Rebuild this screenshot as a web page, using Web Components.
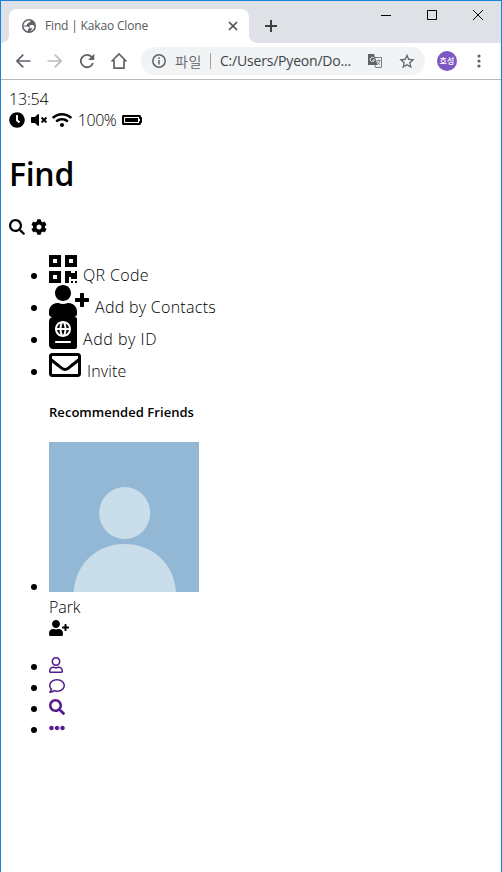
<!DOCTYPE html>
<html lang="en">
<head>
<meta charset="utf-8">
<title>Find | Kakao Clone</title>
<style>
html,body{margin:0;height:100%;background:#fff;overflow:hidden}
body{font-family:"Open Sans","Noto Sans CJK KR",sans-serif;font-size:16px;font-weight:350;color:#000}
</style>
</head>
<body>
<browser-window></browser-window>
<script>
const ICONS = {
clock:[512,'M256,8C119,8,8,119,8,256S119,504,256,504,504,393,504,256,393,8,256,8Zm92.49,313h0l-20,25a16,16,0,0,1-22.49,2.5h0l-67-49.72a40,40,0,0,1-15-31.23V112a16,16,0,0,1,16-16h32a16,16,0,0,1,16,16V256l58,42.5A16,16,0,0,1,348.49,321Z'],
mute:[512,'M215.03 71.05L126.06 160H24c-13.26 0-24 10.74-24 24v144c0 13.25 10.74 24 24 24h102.06l88.97 88.95c15.03 15.03 40.97 4.47 40.97-16.97V88.02c0-21.46-25.96-31.98-40.97-16.97zM461.64 256l45.64-45.64c6.3-6.3 6.3-16.52 0-22.82l-22.82-22.82c-6.3-6.3-16.52-6.3-22.82 0L416 210.36l-45.64-45.64c-6.3-6.3-16.52-6.3-22.82 0l-22.82 22.82c-6.3 6.3-6.3 16.52 0 22.82L370.36 256l-45.63 45.63c-6.3 6.3-6.3 16.52 0 22.82l22.82 22.82c6.3 6.3 16.52 6.3 22.82 0L416 301.64l45.64 45.64c6.3 6.3 16.52 6.3 22.82 0l22.82-22.82c6.3-6.3 6.3-16.52 0-22.82L461.64 256z'],
wifi:[640,'M634.91 154.88C457.74-8.99 182.19-8.93 5.09 154.88c-6.66 6.16-6.79 16.59-.35 22.98l34.24 33.97c6.14 6.1 16.02 6.23 22.4.38 145.92-133.68 371.3-133.71 517.25 0 6.38 5.85 16.26 5.71 22.4-.38l34.24-33.97c6.43-6.39 6.3-16.82-.36-22.98zM320 352c-35.35 0-64 28.65-64 64s28.65 64 64 64 64-28.65 64-64-28.65-64-64-64zm202.67-83.59c-115.26-101.93-290.21-101.82-405.34 0-6.9 6.1-7.12 16.69-.57 23.15l34.44 33.99c6 5.92 15.66 6.32 22.05.8 83.95-72.57 209.74-72.41 293.49 0 6.39 5.52 16.05 5.13 22.05-.8l34.44-33.99c6.56-6.46 6.33-17.06-.56-23.15z'],
battery:[640,'M544 160v64h32v64h-32v64H64V160h480m16-64H48c-26.51 0-48 21.49-48 48v224c0 26.51 21.49 48 48 48h512c26.51 0 48-21.49 48-48v-16h8c13.255 0 24-10.745 24-24V184c0-13.255-10.745-24-24-24h-8v-16c0-26.51-21.49-48-48-48zm-48 96H96v128h416V192z'],
search:[512,'M505 442.7L405.3 343c-4.5-4.5-10.6-7-17-7H372c27.6-35.3 44-79.7 44-128C416 93.1 322.9 0 208 0S0 93.1 0 208s93.1 208 208 208c48.3 0 92.7-16.4 128-44v16.3c0 6.4 2.5 12.5 7 17l99.7 99.7c9.4 9.4 24.6 9.4 33.9 0l28.3-28.3c9.4-9.4 9.4-24.6.1-34zM208 336c-70.7 0-128-57.2-128-128 0-70.7 57.2-128 128-128 70.7 0 128 57.2 128 128 0 70.7-57.2 128-128 128z'],
searchthin:[512,'M507 458L396 347c-3-3-6-4-10-4H368c30-36 48-83 48-135C416 93.100 322.900 0 208 0S0 93.100 0 208s93.100 208 208 208c50 0 97-18 133-48v17c0 4 2 8 5 11l110 110c7 7 18 7 25 0l26-25c6-7 6-17 0-23zM208 346c-76 0-138-62-138-138S132 70 208 70s138 62 138 138-62 138-138 138z'],
cog:[512,'M487.4 315.7l-42.6-24.6c4.3-23.2 4.3-47 0-70.2l42.6-24.6c4.9-2.8 7.1-8.6 5.5-14-11.1-35.6-30-67.8-54.7-94.6-3.8-4.1-10-5.1-14.8-2.3L380.8 110c-17.9-15.4-38.5-27.3-60.8-35.1V25.8c0-5.6-3.9-10.5-9.4-11.7-36.7-8.2-74.3-7.8-109.2 0-5.5 1.2-9.4 6.1-9.4 11.7V75c-22.2 7.9-42.8 19.8-60.8 35.1L88.7 85.5c-4.9-2.8-11-1.9-14.8 2.3-24.7 26.7-43.6 58.9-54.7 94.6-1.7 5.4.6 11.2 5.5 14L67.3 221c-4.3 23.2-4.3 47 0 70.2l-42.6 24.6c-4.9 2.8-7.1 8.6-5.5 14 11.1 35.6 30 67.8 54.7 94.6 3.8 4.1 10 5.1 14.8 2.3l42.6-24.6c17.9 15.4 38.5 27.3 60.8 35.1v49.2c0 5.6 3.9 10.5 9.4 11.7 36.7 8.2 74.3 7.8 109.2 0 5.5-1.2 9.4-6.1 9.4-11.7v-49.2c22.2-7.9 42.8-19.8 60.8-35.1l42.6 24.6c4.9 2.8 11 1.9 14.8-2.3 24.7-26.7 43.6-58.9 54.7-94.6 1.5-5.5-.7-11.3-5.6-14.1zM256 336c-44.1 0-80-35.9-80-80s35.9-80 80-80 80 35.9 80 80-35.9 80-80 80z'],
qrcode:[448,'M0 224h192V32H0v192zM64 96h64v64H64V96zm192-64v192h192V32H256zm128 128h-64V96h64v64zM0 480h192V288H0v192zm64-128h64v64H64v-64zm352-64h32v128h-96v-32h-32v96h-64V288h96v32h64v-32zm0 160h32v32h-32v-32zm-64 0h32v32h-32v-32z'],
userplus:[640,'M624 208h-64v-64c0-8.8-7.2-16-16-16h-32c-8.8 0-16 7.2-16 16v64h-64c-8.8 0-16 7.2-16 16v32c0 8.8 7.2 16 16 16h64v64c0 8.8 7.2 16 16 16h32c8.8 0 16-7.2 16-16v-64h64c8.8 0 16-7.2 16-16v-32c0-8.8-7.2-16-16-16zm-400 48c70.7 0 128-57.3 128-128S294.7 0 224 0 96 57.3 96 128s57.3 128 128 128zm89.6 32h-16.7c-22.2 10.2-46.9 16-72.9 16s-50.6-5.8-72.9-16h-16.7C60.2 288 0 348.2 0 422.4V464c0 26.5 21.5 48 48 48h352c26.5 0 48-21.5 48-48v-41.6c0-74.2-60.2-134.4-134.4-134.4z'],
passport:[448,'M129.62 176h39.09c1.49-27.03 6.54-51.35 14.21-70.41-27.71 13.24-48.02 39.19-53.3 70.41zm0 32c5.29 31.22 25.59 57.17 53.3 70.41-7.68-19.06-12.72-43.38-14.21-70.41h-39.09zM224 286.69c7.69-7.45 20.77-34.42 23.43-78.69h-46.87c2.67 44.26 15.75 71.24 23.44 78.69zM200.57 176h46.87c-2.66-44.26-15.74-71.24-23.43-78.69-7.7 7.45-20.78 34.43-23.44 78.69zm64.51 102.41c27.71-13.24 48.02-39.19 53.3-70.41h-39.09c-1.49 27.03-6.53 51.35-14.21 70.41zM416 0H64C28.65 0 0 28.65 0 64v384c0 35.35 28.65 64 64 64h352c17.67 0 32-14.33 32-32V32c0-17.67-14.33-32-32-32zm-80 416H112c-8.8 0-16-7.2-16-16s7.2-16 16-16h224c8.8 0 16 7.2 16 16s-7.2 16-16 16zm-112-96c-70.69 0-128-57.31-128-128S153.31 64 224 64s128 57.31 128 128-57.31 128-128 128zm41.08-214.41c7.68 19.06 12.72 43.38 14.21 70.41h39.09c-5.28-31.22-25.59-57.17-53.3-70.41z'],
envelope:[512,'M464 64H48C21.49 64 0 85.49 0 112v288c0 26.51 21.49 48 48 48h416c26.51 0 48-21.49 48-48V112c0-26.51-21.49-48-48-48zm0 48v40.805c-22.422 18.259-58.168 46.651-134.587 106.49-16.841 13.247-50.201 45.072-73.413 44.701-23.208.375-56.579-31.459-73.413-44.701C106.18 199.465 70.425 171.067 48 152.805V112h416zM48 400V214.398c22.914 18.251 55.409 43.862 104.938 82.646 21.857 17.205 60.134 55.186 103.062 54.955 42.717.231 80.509-37.199 103.053-54.947 49.528-38.783 82.032-64.401 104.947-82.653V400H48z'],
user:[448,'M313.6 304c-28.7 0-42.5 16-89.6 16-47.1 0-60.8-16-89.6-16C60.2 304 0 364.2 0 438.4V464c0 26.5 21.5 48 48 48h352c26.5 0 48-21.5 48-48v-25.6c0-74.2-60.2-134.4-134.4-134.4zM400 464H48v-25.6c0-47.6 38.8-86.4 86.4-86.4 14.6 0 38.3 16 89.6 16 51.7 0 74.9-16 89.6-16 47.6 0 86.4 38.8 86.4 86.4V464zM224 288c79.5 0 144-64.5 144-144S303.5 0 224 0 80 64.5 80 144s64.5 144 144 144zm0-240c52.9 0 96 43.1 96 96s-43.1 96-96 96-96-43.1-96-96 43.1-96 96-96z'],
comment:[512,'M256 32C114.6 32 0 125.1 0 240c0 47.6 19.9 91.2 52.9 126.3C38 405.7 7 439.1 6.5 439.5c-6.6 7-8.4 17.2-4.6 26S14.4 480 24 480c61.5 0 110-25.7 139.1-46.3C192 442.8 223.2 448 256 448c141.4 0 256-93.1 256-208S397.4 32 256 32zm0 368c-26.7 0-53.1-4.1-78.4-12.1l-22.7-7.2-19.5 13.8c-14.3 10.1-33.9 21.4-57.5 29 7.3-12.1 14.4-25.7 19.9-40.2l10.6-28.1-20.6-21.8C69.7 314.1 48 282.2 48 240c0-88.2 93.3-160 208-160s208 71.8 208 160-93.3 160-208 160z'],
dots:[512,'M328 256c0 39.8-32.2 72-72 72s-72-32.2-72-72 32.2-72 72-72 72 32.2 72 72zm104-72c-39.8 0-72 32.2-72 72s32.2 72 72 72 72-32.2 72-72-32.2-72-72-72zm-352 0c-39.8 0-72 32.2-72 72s32.2 72 72 72 72-32.2 72-72-32.2-72-72-72z']
};
const make = (name, html, setup) => customElements.define(name, class extends HTMLElement {
  constructor(){ super(); this.attachShadow({mode:'open'}); }
  connectedCallback(){
    this.shadowRoot.innerHTML = typeof html === 'function' ? html(this) : html;
    if (setup) setup(this);
  }
});

make('fa-icon', el => {
  const [w,d] = ICONS[el.getAttribute('name')];
  const s = +(el.getAttribute('size') || 16);
  return `<style>:host{display:block;flex:none;width:${w*s/512}px;height:${s}px}svg{display:block;width:100%;height:100%}</style><svg viewBox="0 0 ${w} 512"><path fill="currentColor" d="${d}"/></svg>`;
});

/* Text tracked so that it fills the given width. */
make('ui-text', `<style>:host{display:block;flex:none;white-space:pre}span{display:inline-block}</style><span><slot></slot></span>`, el => {
  const target = +el.getAttribute('width');
  const span = el.shadowRoot.querySelector('span');
  if (target) {
    span.style.letterSpacing = (target - span.getBoundingClientRect().width) / el.textContent.length + 'px';
  }
});

make('list-row', `<style>:host{display:flex;align-items:flex-start;height:var(--h,32px);line-height:var(--h,32px)}
i{flex:none;width:6px;height:6px;border-radius:50%;background:#000;margin:var(--dot,20px) 12px 0 22px}
::slotted(ui-text){padding-top:6px}
::slotted(a){color:#551a8b;padding-top:2px}.c{display:flex;gap:6px}</style><i></i><div class="c"><slot></slot></div>`);

make('profile-picture', `<style>:host{display:block;width:150px;height:150px;background:#92b8d6}svg{display:block}</style>
<svg width="150" height="150"><g fill="#c9ddea"><ellipse cx="75.7" cy="71" rx="25.5" ry="26"/><path d="M24.5 150C27 121 48 102 75.5 102S125 121 127 150Z"/></g></svg>`);

make('browser-tab', `<style>
:host{display:flex;align-items:center;position:relative;width:240px;height:34px;margin-left:8px;background:#fff;border-radius:8px 8px 0 0;color:#54585c;font-size:12px;font-weight:400;line-height:34px;box-sizing:border-box;padding-left:13px}
:host::before,:host::after{content:"";position:absolute;bottom:0;width:8px;height:8px}
:host::before{left:-8px;background:radial-gradient(circle at 0 0,#dee1e6 7.6px,#fff 8.2px)}
:host::after{right:-8px;background:radial-gradient(circle at 100% 0,#dee1e6 7.6px,#fff 8.2px)}
ui-text{margin-left:9px;width:183px}svg{display:block;flex:none}</style>
<svg width="14" height="14" viewBox="0 0 14 14"><circle cx="7" cy="7" r="7" fill="#5f6368"/><path d="M8.2 1.6C9 3 7.8 3.6 6.6 3.6c-.3 1-.8 1.2-1.6 1.2.2 1.4-.3 1.8-1.5 1.7H1.6C1.8 3.6 4.3 1.2 8.2 1.600M1.600 7.600h3.600c1.300 0 2.300 1 2.300 2.200H6v2.500C3.500 11.900 1.800 9.900 1.600 7.600M12.400 7c0 2.400-1.500 4.400-3.700 5.100V11c1-.2 1.500-.8 1.500-1.800-1.700.1-2.600-.6-2.800-1.800.2-1.200 1.200-1.600 2.600-1.400 1-.1 1.300.4 2.400 1" fill="#fff"/></svg>
<ui-text width="103">Find | Kakao Clone</ui-text>
<svg width="10" height="10" viewBox="0 0 10 10" stroke="#4b4f53" stroke-width="1.7"><path d="M1 1l8 8M9 1l-8 8"/></svg>`);

make('tab-strip', `<style>:host{display:flex;height:42px;background:#dee1e6}.tabs{display:flex;align-items:flex-end}
.new{margin:19px 0 0 16px;flex:none}.win{display:flex;margin-left:auto;padding:8px 18px 0 0;gap:36px}svg{display:block}</style>
<div class="tabs"><browser-tab></browser-tab></div>
<svg class="new" width="12" height="12" stroke="#3c4043" stroke-width="2"><path d="M6 0v12M0 6h12"/></svg>
<div class="win"><svg width="10" height="12" stroke="#000"><path d="M0 6.500h10"/></svg><svg width="10" height="12" fill="none" stroke="#000"><path d="M.5 1.500h9v9h-9z"/></svg><svg width="10" height="12" stroke="#000"><path d="M0 1l10 10M10 1L0 11"/></svg></div>`);

make('address-bar', `<style>:host{display:flex;align-items:center;width:284px;height:28px;border-radius:14px;background:#f1f3f4;box-sizing:border-box;padding-left:11px;font-size:14px;font-weight:400;line-height:28px;color:#404448}
svg{display:block;flex:none}.k{margin-left:9px;color:#5f6368;font-family:"Noto Sans CJK KR",sans-serif;font-weight:350}.bar{width:1px;height:16px;background:#9da0a4;margin:0 9px 0 8px}.t{margin-left:17px}.s{margin-left:17px}</style>
<svg width="14" height="14" fill="none" stroke="#5f6368" stroke-width="1.500"><circle cx="7" cy="7" r="6.200"/><path d="M7 6v4.500M7 3.300v1.600"/></svg>
<ui-text class="k" width="27">파일</ui-text><div class="bar"></div><ui-text width="131">C:/Users/Pyeon/Do...</ui-text>
<svg class="t" width="14" height="14" viewBox="0 0 14 14"><path d="M5.500 3.500h8v10h-6z" fill="#f1f3f4" stroke="#7c8084"/><path d="M0 0h6l3.500 11H0z" fill="#5f6368"/><path d="M6.200 4.200A2.200 2.200 0 1 0 6.500 6H4.500" fill="none" stroke="#f1f3f4"/><path d="M8.500 6.500h4M10.500 5.500v1M12 6.500c-.5 2-1.500 3-3 4.200M9.300 7.500c.5 1.300 1.500 2.300 2.700 3.200" fill="none" stroke="#7c8084" stroke-width=".9"/></svg>
<svg class="s" width="16" height="16" viewBox="1.5 1 21 21"><path fill="#5f6368" d="M22 9.240l-7.190-.62L12 2 9.190 8.630 2 9.240l5.460 4.730L5.820 21 12 17.270 18.180 21l-1.630-7.030L22 9.240zM12 15.400l-3.760 2.270 1-4.280-3.320-2.880 4.380-.38L12 6.100l1.710 4.040 4.380.38-3.320 2.880 1 4.280L12 15.400z"/></svg>`);

make('tool-bar', `<style>:host{display:flex;align-items:center;height:36px;border-bottom:1px solid #b8b8ba;padding-left:12px;color:#5f6368}
svg{display:block;flex:none;fill:currentColor;margin-right:12px}.nav{display:flex}
.av{flex:none;width:20px;height:20px;border-radius:50%;background:#7e57c2;color:#fff;margin:0 20px 0 12px;font:500 8px/20px "Noto Sans CJK KR",sans-serif;display:flex;justify-content:center}svg.m{margin:0}</style>
<div class="nav">
<svg width="20" height="20" viewBox="0 0 24 24"><path d="M21 11H7l6-6-1.400-1.400L3.200 12l8.400 8.400L13 19l-6-6h14z"/></svg>
<svg width="20" height="20" viewBox="0 0 24 24" opacity=".42"><path d="M3 11h14l-6-6 1.400-1.400 8.400 8.400-8.400 8.400L11 19l6-6H3z"/></svg>
<svg width="20" height="20" viewBox="0 0 24 24"><path d="M18 6A8.500 8.500 0 1 0 20.200 14.300h-2.300a6.300 6.300 0 1 1-1.500-6.700L13.300 10.700H20.700V3.300z"/></svg>
<svg width="20" height="20" viewBox="0 0 20 20"><path fill="none" stroke="currentColor" stroke-width="1.700" d="M2.500 10.500L10 3l7.500 7.500M5 9v8.200h10V9"/></svg></div>
<address-bar></address-bar><div class="av"><ui-text width="15">호성</ui-text></div>
<svg class="m" width="4" height="14"><circle cx="2" cy="2" r="1.600"/><circle cx="2" cy="7" r="1.600"/><circle cx="2" cy="12" r="1.600"/></svg>`);

make('status-bar', `<style>:host{display:block;line-height:21px}.r{display:flex;height:21px;gap:5.6px}fa-icon{margin-top:2px}</style>
<div class="r"><ui-text width="39.500">13:54</ui-text></div>
<div class="r"><fa-icon name="clock"></fa-icon><fa-icon name="mute"></fa-icon><fa-icon name="wifi"></fa-icon><ui-text width="38.500">100%</ui-text><fa-icon name="battery"></fa-icon></div>`);

make('find-page', `<style>:host{display:block;padding:9px 8px 0}
h1{margin:21px 0 20px;height:44px;line-height:44px;font-size:32px;font-weight:650}h5{margin:21px 0 19px 40px;height:21px;line-height:21px;font-size:13px;font-weight:650}
.tools{display:flex;gap:6px;height:21px;padding-top:3px;box-sizing:border-box;margin-bottom:16px}
.friend{--h:150px;--dot:142px}.info{margin-left:40px;line-height:21px;height:63px}.info fa-icon{margin-top:2px}.nav{--h:21px;--dot:9px}.info ui-text{height:21px;padding-top:5px}</style>
<status-bar></status-bar>
<h1><ui-text width="65">Find</ui-text></h1>
<div class="tools"><fa-icon name="searchthin"></fa-icon><fa-icon name="cog"></fa-icon></div>
<div class="menu">
<list-row><fa-icon name="qrcode" size="32"></fa-icon><ui-text width="66">QR Code</ui-text></list-row>
<list-row><fa-icon name="userplus" size="32"></fa-icon><ui-text width="121">Add by Contacts</ui-text></list-row>
<list-row><fa-icon name="passport" size="32"></fa-icon><ui-text width="74">Add by ID</ui-text></list-row>
<list-row><fa-icon name="envelope" size="32"></fa-icon><ui-text width="39.500">Invite</ui-text></list-row>
</div>
<h5><ui-text width="145">Recommended Friends</ui-text></h5>
<list-row class="friend"><profile-picture></profile-picture></list-row>
<div class="info"><ui-text width="31.500">Park</ui-text><fa-icon name="userplus"></fa-icon></div>
<div class="nav">
<list-row><a><fa-icon name="user"></fa-icon></a></list-row>
<list-row><a><fa-icon name="comment"></fa-icon></a></list-row>
<list-row><a><fa-icon name="search"></fa-icon></a></list-row>
<list-row><a><fa-icon name="dots"></fa-icon></a></list-row>
</div>`);

make('browser-window', `<style>:host{display:block;height:100vh;box-sizing:border-box;border:1px solid #1883d7;border-bottom:0;overflow:hidden}</style><tab-strip></tab-strip><tool-bar></tool-bar><find-page></find-page>`);
</script>
</body>
</html>
